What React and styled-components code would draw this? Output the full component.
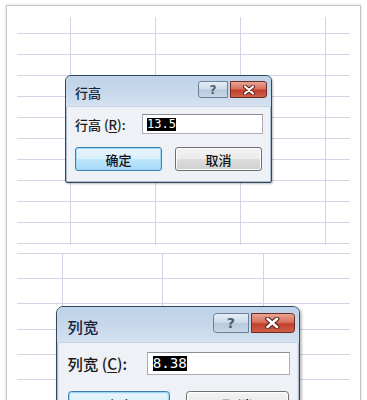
import React from 'react';
import styled, { createGlobalStyle } from 'styled-components';

const Global = createGlobalStyle`
  html, body {
    margin: 0;
    background: #fff;
    overflow: hidden;
  }
  body {
    font-family: "Noto Sans CJK SC", "Liberation Sans", sans-serif;
  }
`;

const LINE = '#d2d6e4';

const Page = styled.div`
  padding: 5px 6px 0 6px;
  height: 400px;
  box-sizing: border-box;
`;

const Frame = styled.div`
  border: 1px solid #c6c6c6;
  box-shadow: 0 0 3px rgba(0, 0, 0, 0.18);
  background: #fff;
  padding: 11px 10px 0 10px;
  display: flex;
  flex-direction: column;
  gap: 8px;
  height: 420px;
  box-sizing: border-box;
`;

// a bit of spreadsheet, grid lines drawn as repeating gradients
const Sheet = styled.div`
  height: ${p => p.$h}px;
  padding: ${p => p.$top}px 0 0 ${p => p.$left}px;
  box-sizing: border-box;
  background:
    repeating-linear-gradient(to bottom,
      transparent 0 ${p => p.$ry}px,
      ${LINE} ${p => p.$ry}px ${p => p.$ry + 1}px,
      transparent ${p => p.$ry + 1}px ${p => p.$r}px),
    repeating-linear-gradient(to right,
      transparent 0 ${p => p.$cx}px,
      ${LINE} ${p => p.$cx}px ${p => p.$cx + 1}px,
      transparent ${p => p.$cx + 1}px ${p => p.$c}px);
`;

const Dialog = styled.div`
  zoom: ${p => p.$zoom};
  width: 207px;
  box-sizing: border-box;
  border: 1px solid #32495d;
  border-radius: 6px 6px 2px 2px;
  background: #eef1f6;
  box-shadow: inset 0 0 0 1px #a9bccf, 1px 1px 2px rgba(0, 0, 0, 0.25);
  overflow: hidden;
`;

const TitleBar = styled.div`
  height: 30px;
  display: flex;
  align-items: flex-start;
  padding: 0 4px 0 9px;
  background: linear-gradient(to bottom, #bfd2e8 0%, #c9d9ec 60%, #d4e1f0 100%);
  border-bottom: 1px solid #c5d3e3;
`;

const Title = styled.span`
  margin-top: 8px;
  font-size: 13px;
  font-weight: 500;
  line-height: 18px;
  color: #15253a;
  flex: 1;
`;

const CapButton = styled.div`
  margin-top: 5px;
  height: 17px;
  width: ${p => p.$w}px;
  box-sizing: border-box;
  display: flex;
  align-items: center;
  justify-content: center;
  border: 1px solid ${p => (p.$close ? '#6b2a22' : '#6c7f96')};
  border-radius: ${p => (p.$close ? '0 3px 3px 0' : '3px 0 0 3px')};
  background: ${p =>
    p.$close
      ? 'linear-gradient(to bottom, #e8a596 0%, #d9705f 45%, #c0402c 55%, #d0604a 100%)'
      : 'linear-gradient(to bottom, #e6eef7 0%, #cfdcea 45%, #b7c9dd 55%, #c7d7e8 100%)'};
  margin-left: ${p => (p.$close ? '2px' : '0')};
  color: #4b5f77;
  font-family: "DejaVu Sans", sans-serif;
  font-size: 12px;
  font-weight: bold;
`;

const Body = styled.div`
  padding: 7px 8px 11px 9px;
`;

const Row = styled.div`
  display: flex;
  align-items: center;
  justify-content: space-between;
`;

const Label = styled.span`
  font-size: 13px;
  font-weight: 500;
  color: #1b1b1b;
  white-space: nowrap;
  u {
    text-decoration: underline;
    text-underline-offset: 2px;
  }
`;

const Input = styled.div`
  width: 121px;
  height: 20px;
  box-sizing: border-box;
  border: 1px solid #abadb3;
  border-top-color: #8a8d94;
  background: #fff;
  padding: 2px 4px;
  display: flex;
  align-items: center;
`;

const Selected = styled.span`
  background: #000;
  color: #fff;
  font-family: "DejaVu Sans Mono", monospace;
  font-size: 12px;
  line-height: 13px;
`;

const Buttons = styled(Row)`
  margin-top: 13px;
  padding-right: 1px;
`;

const Button = styled.div`
  width: 87px;
  height: 24px;
  box-sizing: border-box;
  border-radius: 3px;
  display: flex;
  align-items: center;
  justify-content: center;
  font-size: 13px;
  font-weight: 500;
  color: #111;
  border: 1px solid ${p => (p.$primary ? '#3c7fb1' : '#707070')};
  background: ${p =>
    p.$primary
      ? 'linear-gradient(to bottom, #e8f5fc 0%, #d9effa 50%, #bee6fd 51%, #a7d9f5 100%)'
      : 'linear-gradient(to bottom, #f2f2f2 0%, #ebebeb 50%, #dddddd 51%, #cfcfcf 100%)'};
  box-shadow: inset 0 0 0 1px ${p => (p.$primary ? '#9fd8f6' : '#fcfcfc')};
`;

const CloseGlyph = () => (
  <svg width="14" height="10" viewBox="0 0 14 10">
    <path d="M3 1.5 L11 8.5 M11 1.5 L3 8.5" stroke="#5a1e16" strokeWidth="4" strokeLinecap="round" />
    <path d="M3 1.5 L11 8.5 M11 1.5 L3 8.5" stroke="#fff" strokeWidth="2.2" strokeLinecap="round" />
  </svg>
);

const SizeDialog = ({ title, label, hotkey, value, zoom }) => (
  <Dialog $zoom={zoom}>
    <TitleBar>
      <Title>{title}</Title>
      <CapButton $w={30}>?</CapButton>
      <CapButton $w={37} $close>
        <CloseGlyph />
      </CapButton>
    </TitleBar>
    <Body>
      <Row>
        <Label>
          {label} (<u>{hotkey}</u>):
        </Label>
        <Input>
          <Selected>{value}</Selected>
        </Input>
      </Row>
      <Buttons>
        <Button $primary>确定</Button>
        <Button>取消</Button>
      </Buttons>
    </Body>
  </Dialog>
);

const App = () => (
  <Page>
    <Global />
    <Frame>
      <Sheet $h={228} $r={21} $ry={16} $c={85} $cx={53} $top={58} $left={48}>
        <SizeDialog title="行高" label="行高" hotkey="R" value="13.5" zoom={1} />
      </Sheet>
      <Sheet $h={170} $r={25.2} $ry={0} $c={100.5} $cx={45} $top={53} $left={39}>
        <SizeDialog title="列宽" label="列宽" hotkey="C" value="8.38" zoom={1.18} />
      </Sheet>
    </Frame>
  </Page>
);

export default App;
